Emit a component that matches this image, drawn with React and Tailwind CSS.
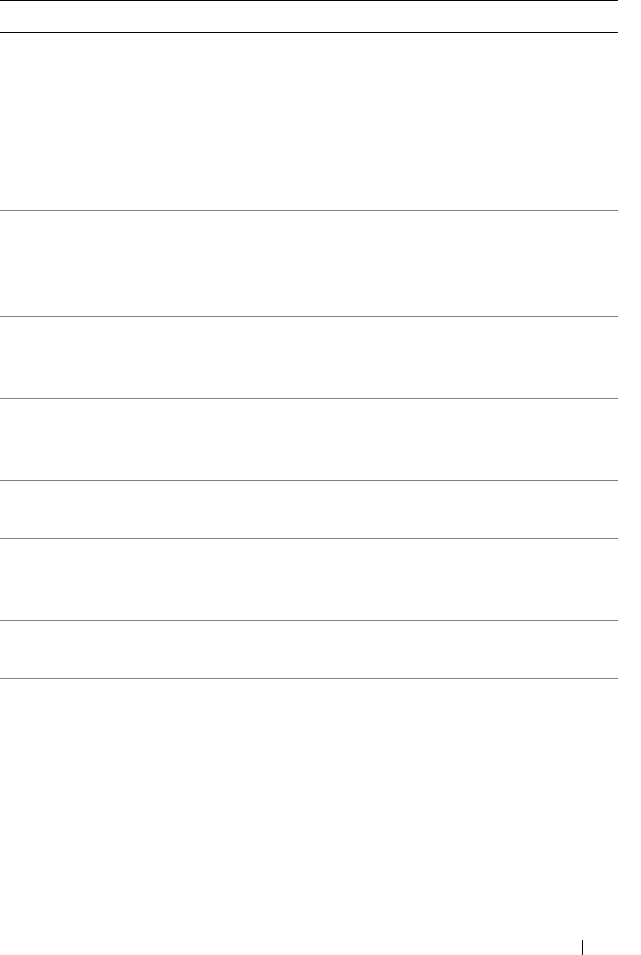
export default function App() {
  const rows = [177, 105, 81, 81, 57, 81, 57];
  return (
    <div className="flex h-[955px] w-[641px] flex-col bg-white" style={{ fontFamily: '"Liberation Sans", sans-serif' }}>
      <div className="w-[618px]">
        <div className="h-[33px] border-y border-black" />
        {rows.map((h, i) => (
          <div key={i} className="border-b border-[#808080]" style={{ height: h + 1 }} />
        ))}
      </div>
      <div className="mt-auto flex h-[15px] w-[641px]">
        <div className="ml-[582px] h-[15px] w-px bg-black" />
      </div>
    </div>
  );
}
